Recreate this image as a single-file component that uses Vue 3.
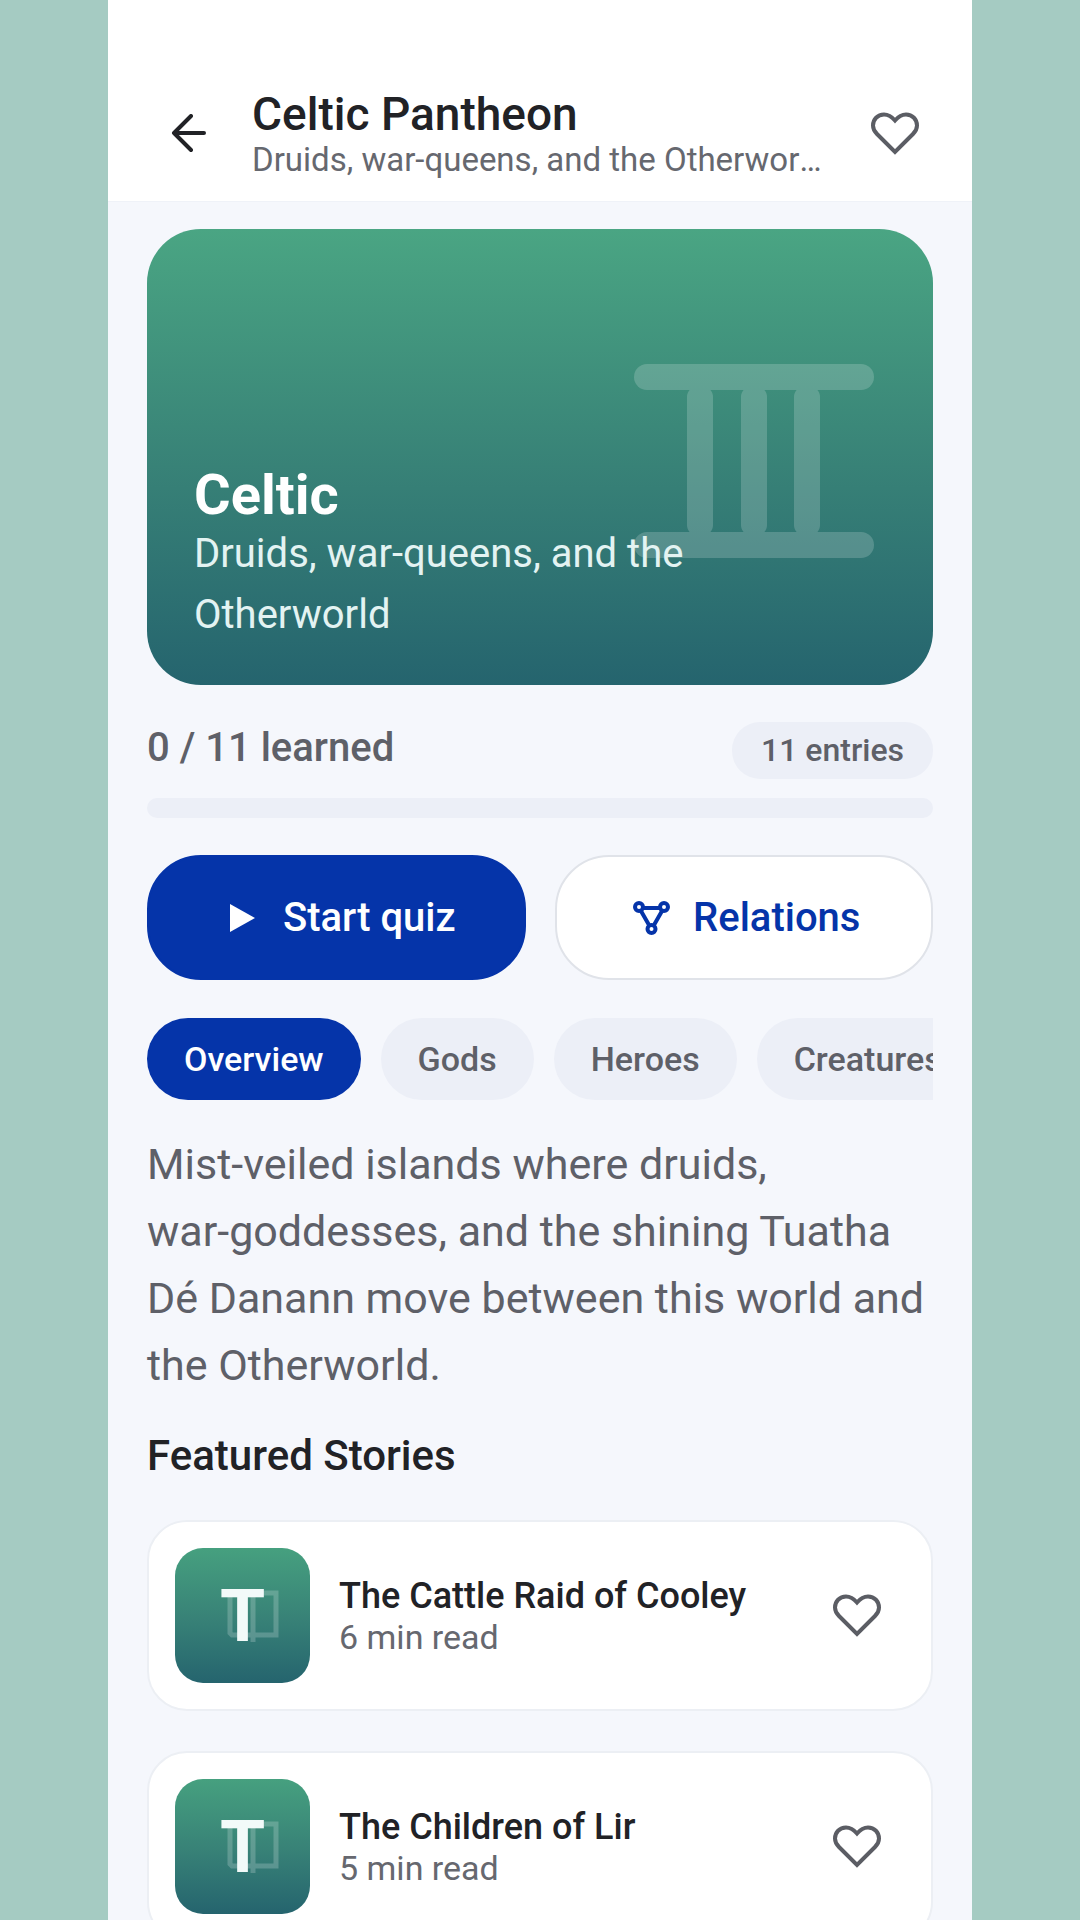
<script setup>
import { ref } from 'vue'

const tabs = ['Overview', 'Gods', 'Heroes', 'Creatures']
const activeTab = ref('Overview')

const learned = 0
const total = 11

const stories = [
  { title: 'The Cattle Raid of Cooley', minutes: 6 },
  { title: 'The Children of Lir', minutes: 5 },
]

const heart =
  'M24 8.5C21 5 17.5 2.5 13 2.5C6.5 2.5 2 7.5 2 13.5C2 17 3.5 19.5 6 22L24 40L42 22C44.5 19.5 46 17 46 13.5C46 7.5 41.5 2.5 35 2.5C30.5 2.5 27 5 24 8.5Z'
</script>

<template>
  <div class="page">
    <div class="screen">
      <header class="bar">
        <button class="icon-btn back" type="button" aria-label="Back">
          <svg width="40" height="40" viewBox="0 0 40 40">
            <path d="M35 19H5M22 2L5 19L22 36" />
          </svg>
        </button>
        <div class="bar-text">
          <h1>Celtic Pantheon</h1>
          <p>Druids, war-queens, and the Otherworld</p>
        </div>
        <button class="icon-btn" type="button" aria-label="Add pantheon to favourites">
          <svg width="48" height="43" viewBox="0 0 48 43"><path :d="heart" /></svg>
        </button>
      </header>

      <main class="content">
        <section class="hero">
          <svg class="hero-icon" width="240" height="194" viewBox="0 0 240 194" aria-hidden="true">
            <g fill="#fff">
              <rect width="240" height="26" rx="13" />
              <rect y="168" width="240" height="26" rx="13" />
              <rect x="53" y="22" width="26" height="150" rx="11" />
              <rect x="107" y="22" width="26" height="150" rx="11" />
              <rect x="160" y="22" width="26" height="150" rx="11" />
            </g>
          </svg>
          <h2>Celtic</h2>
          <p>Druids, war-queens, and the Otherworld</p>
        </section>

        <div class="stats">
          <label class="learned" for="learned-bar">{{ learned }} / {{ total }} learned</label>
          <span class="entries">{{ total }} entries</span>
        </div>
        <progress id="learned-bar" class="progress" :value="learned" :max="total"></progress>

        <div class="actions">
          <button class="action primary" type="button">
            <svg width="48" height="48" viewBox="0 0 48 48" aria-hidden="true">
              <path d="M13 10L38 24L13 38Z" fill="#fff" />
            </svg>
            Start quiz
          </button>
          <button class="action" type="button">
            <svg width="48" height="48" viewBox="0 0 48 48" fill="none" stroke="currentColor" stroke-width="4" aria-hidden="true">
              <circle cx="12" cy="13" r="4" />
              <circle cx="37" cy="13" r="4" />
              <circle cx="24.500" cy="35" r="4" />
              <path d="M16 14H33M14 17L22 31M35 17L27 31" />
            </svg>
            Relations
          </button>
        </div>

        <nav class="tabs" aria-label="Sections">
          <button
            v-for="tab in tabs"
            :key="tab"
            type="button"
            class="tab"
            :class="{ active: tab === activeTab }"
            @click="activeTab = tab"
          >
            {{ tab }}
          </button>
        </nav>

        <p class="summary">
          Mist-veiled islands where druids,<br />
          war-goddesses, and the shining Tuatha Dé Danann move between this world and the
          Otherworld.
        </p>

        <h2 class="heading">Featured Stories</h2>

        <article v-for="story in stories" :key="story.title" class="card">
          <div class="thumb">
            <svg class="book" width="52" height="54" viewBox="0 0 52 54" aria-hidden="true">
              <path d="M3 4H49V46H5L3 44ZM26 4V53" />
            </svg>
            <span class="initial">{{ story.title[0] }}</span>
          </div>
          <div class="card-text">
            <h3>{{ story.title }}</h3>
            <p>{{ story.minutes }} min read</p>
          </div>
          <button class="icon-btn" type="button" :aria-label="`Add ${story.title} to favourites`">
            <svg width="48" height="43" viewBox="0 0 48 43"><path :d="heart" /></svg>
          </button>
        </article>
      </main>
    </div>
  </div>
</template>

<style>
body {
  margin: 0;
}
</style>

<style scoped>
.page {
  height: 100vh;
  display: flex;
  justify-content: center;
  background: #a5cbc2;
  font-family: Roboto, 'Liberation Sans', sans-serif;
  color: #212226;
}

.page * {
  box-sizing: border-box;
}

h1,
h2,
h3,
p {
  margin: 0;
}

button {
  font: inherit;
  border: 0;
  padding: 0;
  cursor: pointer;
}

.screen {
  width: 80%;
  display: flex;
  flex-direction: column;
  background: #f5f7fc;
}

.bar {
  flex: none;
  display: flex;
  align-items: center;
  gap: 21px;
  padding: 88px 39px 22px;
  background: #fff;
  border-bottom: 1px solid #eff2f8;
}

.bar-text {
  flex: 1;
  min-width: 0;
  padding-right: 13px;
}

h1 {
  font-size: 46px;
  line-height: 52px;
  font-weight: 500;
}

.bar-text p {
  overflow: hidden;
  font-size: 33px;
  line-height: 39px;
  color: #66686f;
  white-space: nowrap;
  text-overflow: ellipsis;
}

.icon-btn {
  flex: none;
  width: 76px;
  height: 76px;
  display: grid;
  place-items: center;
  background: none;
}

.icon-btn path {
  fill: none;
  stroke: #5b5d64;
  stroke-width: 4;
}

.back {
  width: 84px;
}

.back path {
  stroke: #212226;
  stroke-linecap: round;
  stroke-linejoin: round;
}

.content {
  flex: 1;
  min-height: 0;
  display: flex;
  flex-direction: column;
  padding: 27px 39px;
  overflow-y: auto;
  scrollbar-width: none;
}

.content > * {
  flex: none;
}

.hero {
  position: relative;
  display: flex;
  flex-direction: column;
  justify-content: flex-end;
  min-height: 456px;
  padding: 40px 47px;
  border-radius: 54px;
  background: linear-gradient(#4aa583, #388277 52%, #25646e);
  color: #fff;
}

.hero-icon {
  position: absolute;
  right: 59px;
  top: 135px;
  opacity: 0.18;
}

.hero h2 {
  position: relative;
  font-size: 56px;
  line-height: 56px;
  font-weight: 700;
}

.hero p {
  position: relative;
  font-size: 40px;
  line-height: 61px;
  color: #e3f3f2;
}

.stats {
  display: flex;
  justify-content: space-between;
  align-items: flex-start;
  margin-top: 37px;
}

.learned {
  font-size: 40px;
  line-height: 52px;
  font-weight: 500;
  color: #5e6068;
}

.entries {
  padding: 0 29px;
  border-radius: 28px;
  background: #eceff7;
  font-size: 32px;
  line-height: 57px;
  font-weight: 500;
  color: #5e6068;
}

.progress {
  appearance: none;
  display: block;
  width: 100%;
  height: 20px;
  margin-top: 19px;
  border: 0;
  border-radius: 10px;
  background: #eceff7;
  overflow: hidden;
}

.progress::-webkit-progress-bar {
  background: #eceff7;
}

.progress::-webkit-progress-value {
  background: #0534a9;
}

.actions {
  display: flex;
  gap: 29px;
  margin-top: 37px;
}

.action {
  flex: 1;
  display: flex;
  align-items: center;
  justify-content: center;
  gap: 18px;
  height: 125px;
  border: 2px solid #e0e3e9;
  border-radius: 54px;
  background: #fff;
  color: #0534a9;
  font-size: 40px;
  font-weight: 500;
}

.primary {
  border-color: #0534a9;
  background: #0534a9;
  color: #fff;
}

.tabs {
  display: flex;
  gap: 20px;
  margin-top: 38px;
  overflow-x: auto;
  scrollbar-width: none;
}

.tab {
  flex: none;
  height: 82px;
  padding: 0 37px;
  border-radius: 41px;
  background: #eceff7;
  color: #5e6068;
  font-size: 34px;
  font-weight: 500;
}

.active {
  background: #0534a9;
  color: #fff;
}

.summary {
  margin-top: 31px;
  font-size: 43px;
  line-height: 67px;
  color: #5e6068;
}

.heading {
  margin-top: 33px;
  font-size: 42px;
  line-height: 48px;
  font-weight: 500;
}

.card {
  display: flex;
  align-items: center;
  gap: 29px;
  margin-top: 40px;
  padding: 26px 36px 26px 26px;
  border: 2px solid #eceff4;
  border-radius: 40px;
  background: #fff;
}

.thumb {
  position: relative;
  flex: none;
  width: 135px;
  height: 135px;
  display: grid;
  place-items: center;
  border-radius: 28px;
  background: linear-gradient(#46a07f, #388277 52%, #25646e);
}

.book {
  position: absolute;
  left: 52px;
  top: 41px;
  fill: none;
  stroke: #fff;
  stroke-width: 5;
  opacity: 0.2;
}

.initial {
  position: relative;
  font-size: 73px;
  line-height: 84px;
  font-weight: 700;
  color: #f2faf9;
}

.card-text {
  flex: 1;
  min-width: 0;
}

h3 {
  font-size: 36px;
  line-height: 42px;
  font-weight: 500;
}

.card-text p {
  font-size: 34px;
  line-height: 40px;
  color: #66686f;
}
</style>
